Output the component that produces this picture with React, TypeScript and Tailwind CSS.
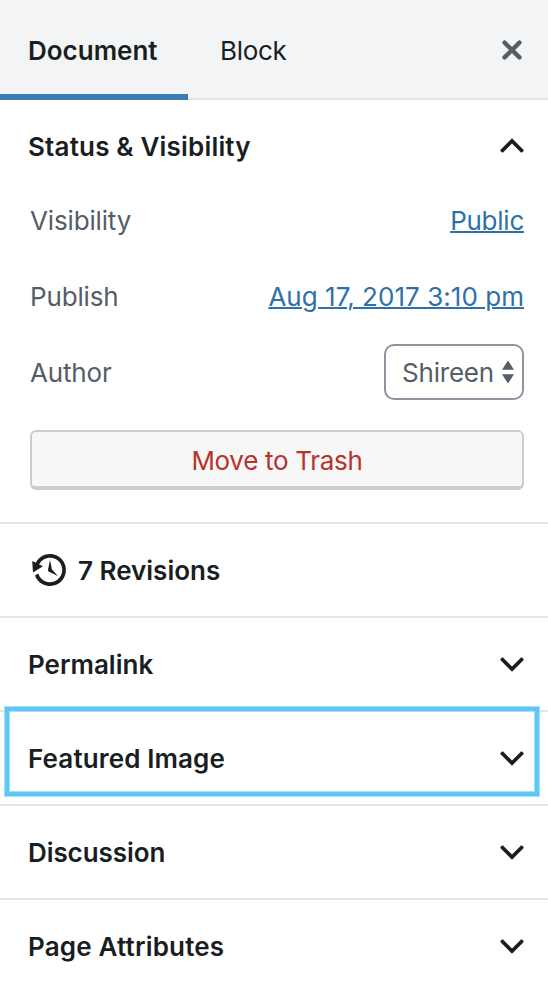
import { useState } from "react";

interface PanelProps {
  title: string;
  titleClass?: string;
  highlighted?: boolean;
}

function Chevron({ up }: { up?: boolean }) {
  return (
    <svg className="h-[15px] w-6" viewBox="0 0 24 15" fill="#191e23">
      <path d={up ? "M12 .3l11.7 11.6-.2 1-1.5 1.5-1 .1-9-8.9-9 8.9-1-.1-1.5-1.5-.2-1z" : "M12 14.7L.3 3.1l.2-1L2 .6l1-.1 9 8.9 9-8.9 1 .1 1.5 1.5.2 1z"} />
    </svg>
  );
}

function Panel({ title, titleClass = "", highlighted }: PanelProps) {
  return (
    <section className="relative h-[94px] border-t-2 border-[#e2e4e7]">
      <button className="flex h-full w-full items-center justify-between pr-6 pl-7 font-semibold">
        <span className={`pt-[2px] ${titleClass}`}>{title}</span>
        <Chevron />
      </button>
      {highlighted && (
        <div className="pointer-events-none absolute -top-[5px] left-[5px] h-[89px] w-[534px] border-4 border-[#5fc6f8] shadow-[0_0_0_1px_#a5e0fb,inset_0_0_0_1px_#a5e0fb]" />
      )}
    </section>
  );
}

export default function App() {
  const [tab, setTab] = useState("Document");

  return (
    <div className="h-[990px] w-[548px] overflow-hidden bg-white font-['Inter',sans-serif] text-[26px] leading-8 text-[#191e23]">
      <header className="flex h-[100px] border-b-2 border-[#e2e4e7] bg-[#f3f4f5]">
        {["Document", "Block"].map((name) => (
          <button
            key={name}
            onClick={() => setTab(name)}
            className={`h-[100px] pl-7 text-left ${tab === name ? "w-[188px] border-b-[6px] border-[#3a7ab5] pt-[8px] font-semibold" : "ml-1 pt-[2px] tracking-[-0.3px]"}`}
          >
            {name}
          </button>
        ))}
        <button className="mr-[26px] ml-auto pt-[2px]" aria-label="Close">
          <svg className="h-5 w-5" viewBox="0 0 20 20" stroke="#555d66" strokeWidth={4.4} strokeLinecap="round">
            <path d="M2.6 2.6l14.8 14.8M17.4 2.6L2.6 17.4" />
          </svg>
        </button>
      </header>

      <section className="h-[422px] pr-6 pl-[30px] tracking-[-0.15px] text-[#555d66]">
        <button className="-ml-[2px] flex h-[92px] w-[496px] items-center justify-between pb-px font-semibold tracking-[0.18px] text-[#191e23]">
          <span className="pt-[3px]">Status &amp; Visibility</span>
          <Chevron up />
        </button>
        <div className="flex h-[56px] items-center justify-between pt-[2px]">
          <span>Visibility</span>
          <a className="tracking-[-0.25px] text-[#2e71a8] underline decoration-2" href="#">Public</a>
        </div>
        <div className="mt-5 flex h-[56px] items-center justify-between pt-[2px]">
          <span>Publish</span>
          <a className="tracking-[0.04px] text-[#2e71a8] underline decoration-2" href="#">Aug 17, 2017 3:10 pm</a>
        </div>
        <div className="mt-5 flex h-[56px] items-center justify-between">
          <span className="pt-[2px]">Author</span>
          <button className="flex h-[56px] w-[140px] items-center justify-between rounded-[10px] border-2 border-[#8d94a2] pr-2 pl-4">
            <span className="pt-[2px] tracking-[-0.2px]">Shireen</span>
            <svg className="h-6 w-3" viewBox="0 0 12 24" fill="#555d66">
              <path d="M6 .5l6 9.2H0zM6 23.5l6-9.2H0z" />
            </svg>
          </button>
        </div>
        <button className="mt-[30px] h-[60px] w-full rounded-md border-2 border-b-4 border-[#ccc] bg-[#f7f7f7] pt-[3px] tracking-[-0.3px] text-[#b8322e]">
          Move to Trash
        </button>
      </section>

      <section className="flex h-[94px] items-center gap-2 border-t-2 border-[#e2e4e7] pl-[30px] font-semibold">
        <svg className="h-10 w-10" viewBox="0 0 20 20" fill="#191e23">
          <path d="M13.65 2.88c3.93 2.01 5.48 6.84 3.47 10.77s-6.83 5.48-10.77 3.47c-1.87-.96-3.2-2.56-3.86-4.4l1.64-1.03c.45 1.57 1.52 2.95 3.08 3.76 3.01 1.54 6.69.35 8.23-2.66 1.55-3.01.36-6.69-2.65-8.24C9.78 3.01 6.1 4.2 4.56 7.21l1.88.97-4.95 3.08-.39-5.82 1.78.91C4.9 2.4 9.75.89 13.65 2.88zm-4.36 7.83C9.11 10.53 9 10.28 9 10c0-.07.03-.12.04-.19h-.01L10 5l.97 4.81L14 13l-4.5-2.12.02-.02c-.08-.04-.16-.09-.23-.15z" />
        </svg>
        <span className="pt-[2px]">7 Revisions</span>
      </section>
      <Panel title="Permalink" />
      <Panel title="Featured Image" titleClass="tracking-[0.13px]" highlighted />
      <Panel title="Discussion" titleClass="tracking-[-0.08px]" />
      <Panel title="Page Attributes" titleClass="tracking-[0.18px]" />
    </div>
  );
}
